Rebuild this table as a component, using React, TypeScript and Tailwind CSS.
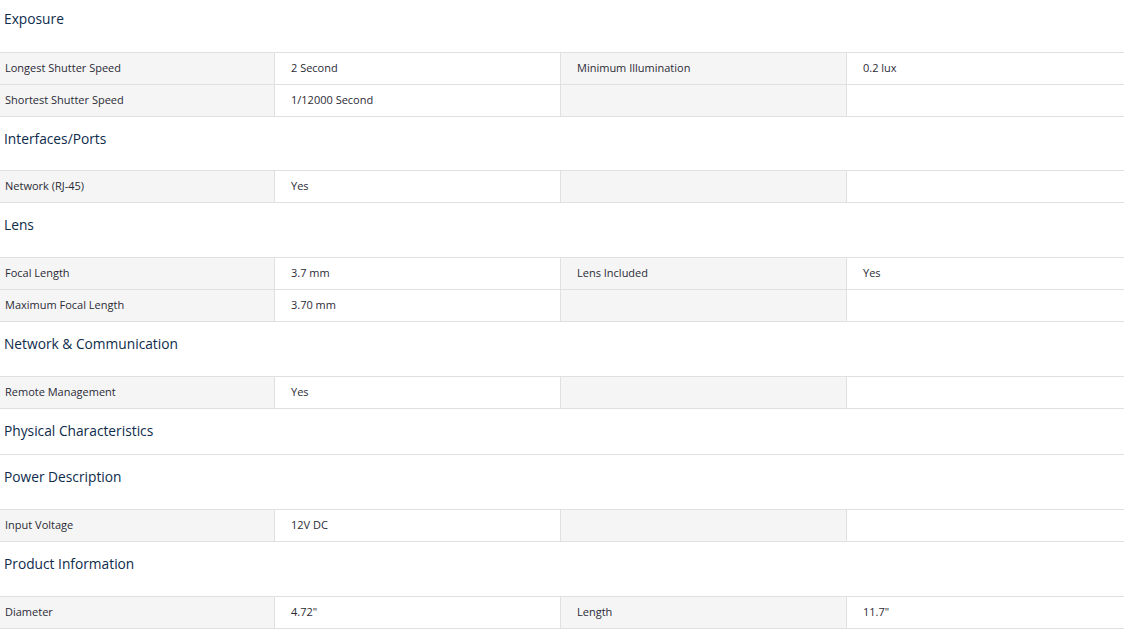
import React from "react";

type Row = [string, string, string, string];
type Section = { title: string; rows: Row[] };

const sections: Section[] = [
  {
    title: "Exposure",
    rows: [
      ["Longest Shutter Speed", "2 Second", "Minimum Illumination", "0.2 lux"],
      ["Shortest Shutter Speed", "1/12000 Second", "", ""],
    ],
  },
  { title: "Interfaces/Ports", rows: [["Network (RJ-45)", "Yes", "", ""]] },
  {
    title: "Lens",
    rows: [
      ["Focal Length", "3.7 mm", "Lens Included", "Yes"],
      ["Maximum Focal Length", "3.70 mm", "", ""],
    ],
  },
  { title: "Network & Communication", rows: [["Remote Management", "Yes", "", ""]] },
  { title: "Physical Characteristics", rows: [] },
  { title: "Power Description", rows: [["Input Voltage", "12V DC", "", ""]] },
  { title: "Product Information", rows: [["Diameter", "4.72\"", "Length", "11.7\""]] },
];

function headingClass(i: number) {
  if (i === 0) return "h-[52px] pt-[9px]";
  if (i === 1) return "h-[53px] pt-[12px]";
  return "h-[54px] pt-[12px]";
}

export default function App() {
  return (
    <div
      className="w-[1124px] h-[632px] overflow-hidden bg-white text-[#2b2b35]"
      style={{ fontFamily: '"Open Sans", "Noto Sans", sans-serif' }}
    >
      {sections.map((s, i) => (
        <div key={s.title}>
          {s.rows.length === 0 ? (
            <div className="h-[46px] border-b border-[#e0e0e0] pl-[4px] pt-[12px] text-[13.75px] leading-[20px] text-[#0d2b4b]">
              {s.title}
            </div>
          ) : (
            <>
              <div className={headingClass(i) + " pl-[4px] text-[13.75px] leading-[20px] text-[#0d2b4b]"}>
                {s.title}
              </div>
              <div className="border-t border-[#e0e0e0]">
                {s.rows.map((r, j) => (
                  <div
                    key={j}
                    className="grid grid-cols-[275px_286px_286px_1fr] h-[32px] border-b border-[#e0e0e0] text-[11px] leading-[30px]"
                  >
                    <div className="bg-[#f5f5f5] border-r border-[#e0e0e0] pl-[5px]">{r[0]}</div>
                    <div className="bg-white border-r border-[#e0e0e0] pl-[16px]">{r[1]}</div>
                    <div className="bg-[#f5f5f5] border-r border-[#e0e0e0] pl-[16px]">{r[2]}</div>
                    <div className="bg-white pl-[16px]">{r[3]}</div>
                  </div>
                ))}
              </div>
            </>
          )}
        </div>
      ))}
    </div>
  );
}
